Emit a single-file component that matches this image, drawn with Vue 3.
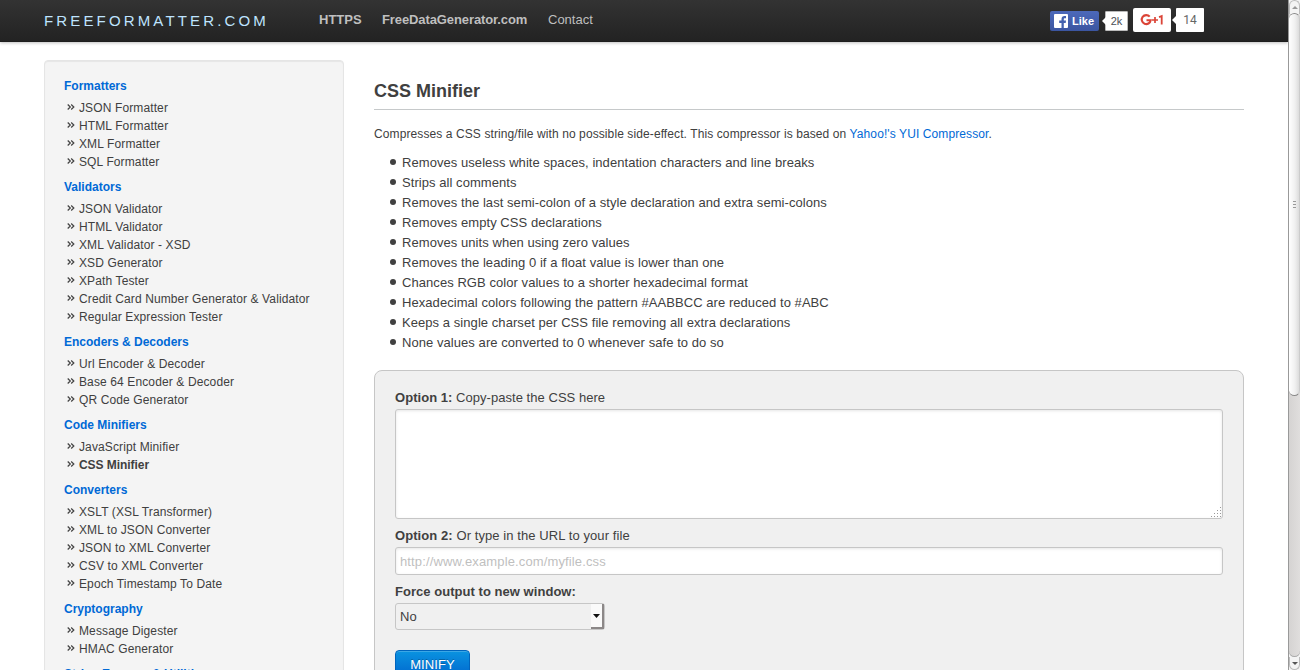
<script setup>
const groups = [
  { title: 'Formatters', items: ['JSON Formatter', 'HTML Formatter', 'XML Formatter', 'SQL Formatter'] },
  { title: 'Validators', items: ['JSON Validator', 'HTML Validator', 'XML Validator - XSD', 'XSD Generator', 'XPath Tester', 'Credit Card Number Generator & Validator', 'Regular Expression Tester'] },
  { title: 'Encoders & Decoders', items: ['Url Encoder & Decoder', 'Base 64 Encoder & Decoder', 'QR Code Generator'] },
  { title: 'Code Minifiers', items: ['JavaScript Minifier', 'CSS Minifier'] },
  { title: 'Converters', items: ['XSLT (XSL Transformer)', 'XML to JSON Converter', 'JSON to XML Converter', 'CSV to XML Converter', 'Epoch Timestamp To Date'] },
  { title: 'Cryptography', items: ['Message Digester', 'HMAC Generator'] },
  { title: 'String Escaper & Utilities', items: [] },
]
const features = [
  'Removes useless white spaces, indentation characters and line breaks',
  'Strips all comments',
  'Removes the last semi-colon of a style declaration and extra semi-colons',
  'Removes empty CSS declarations',
  'Removes units when using zero values',
  'Removes the leading 0 if a float value is lower than one',
  'Chances RGB color values to a shorter hexadecimal format',
  'Hexadecimal colors following the pattern #AABBCC are reduced to #ABC',
  'Keeps a single charset per CSS file removing all extra declarations',
  'None values are converted to 0 whenever safe to do so',
]
</script>

<template>
  <div class="window">
    <div class="page">
      <header class="topbar">
        <a class="brand">FREEFORMATTER.COM</a>
        <nav class="nav">
          <a class="strong https">HTTPS</a>
          <a class="strong fdg">FreeDataGenerator.com</a>
          <a class="contact">Contact</a>
        </nav>
        <div class="social">
          <span class="fb">
            <svg width="14" height="14" viewBox="0 0 14 14"><rect width="14" height="14" rx="1" fill="#fff" /><path d="M7.500 14V9H5.200V6.600h2.300V5.200C7.500 3 8.700 2 10.500 2H12v2.300h-1.200c-.8 0-1 .4-1 1v1.300H12L11.700 9H9.800v5z" fill="#4361ae" /></svg>
            <b>Like</b>
          </span>
          <span class="bubble fbcount">2k</span>
          <span class="gplus">
            <svg width="24" height="14" viewBox="0 0 24 14" fill="none" stroke="#db4437"><path d="M9.700 3.700A4.500 4.500 0 1 0 10.700 7.200H6.500" stroke-width="2.100" /><path d="M12 7h6M15 4v6" stroke-width="1.700" /><path d="M19 4.100l2.700-1V11.500" stroke-width="1.800" /></svg>
          </span>
          <span class="bubble gcount">14</span>
        </div>
      </header>

      <div class="columns">
        <aside class="sidebar">
          <section v-for="g in groups" :key="g.title" class="group">
            <h4>{{ g.title }}</h4>
            <ul>
              <li v-for="i in g.items" :key="i" :class="{ current: i === 'CSS Minifier' }">
                <svg width="8" height="6" viewBox="0 0 8 6" fill="none" stroke="#444" stroke-width="1.250"><path d="M.7.500 3.300 3 .7 5.500M4.200.500 6.800 3 4.200 5.500" /></svg>
                <span>{{ i }}</span>
              </li>
            </ul>
          </section>
        </aside>

        <main class="content">
          <h1><span>CSS Minifier</span></h1>
          <p class="intro">Compresses a CSS string/file with no possible side-effect. This compressor is based on <a>Yahoo!'s YUI Compressor</a>.</p>
          <ul class="features">
            <li v-for="f in features" :key="f"><span>{{ f }}</span></li>
          </ul>
          <form class="panel" @submit.prevent>
            <label><b>Option 1:</b> Copy-paste the CSS here</label>
            <div class="field area">
              <svg width="10" height="10" viewBox="0 0 10 10" fill="#999"><path d="M9 0h1v1H9zM6 3h1v1H6zM9 3h1v1H9zM3 6h1v1H3zM6 6h1v1H6zM9 6h1v1H9zM0 9h1v1H0zM3 9h1v1H3zM6 9h1v1H6zM9 9h1v1H9z" /></svg>
            </div>
            <label class="second"><b>Option 2:</b> Or type in the URL to your file</label>
            <input class="field url" type="text" placeholder="http://www.example.com/myfile.css">
            <label class="third"><b>Force output to new window:</b></label>
            <div class="select"><span>No</span><i><svg width="7" height="4" viewBox="0 0 7 4"><path d="M0 0h7L3.500 4z" fill="#111" /></svg></i></div>
            <button class="go" type="submit">MINIFY</button>
          </form>
        </main>
      </div>
    </div>

    <div class="scrollbar">
      <div class="arrow up"><svg width="6" height="3" viewBox="0 0 6 3"><path d="M0 3h6L3 0z" fill="#999" /></svg></div>
      <div class="track">
        <div class="thumb"><i></i><i></i><i></i></div>
      </div>
      <div class="arrow down"><svg width="6" height="3" viewBox="0 0 6 3"><path d="M0 0h6L3 3z" fill="#555" /></svg></div>
    </div>
  </div>
</template>

<style>
body { margin: 0; overflow: hidden; }
</style>

<style scoped>
.window { display: flex; width: 1300px; height: 670px; overflow: hidden; background: #fff; color: #404040; font-family: "Liberation Sans", Arial, sans-serif; font-size: 13px; }
.page { width: 1288px; height: 670px; overflow: hidden; }
ul { list-style: none; margin: 0; padding: 0; }
.topbar { box-sizing: border-box; display: flex; align-items: flex-start; height: 42px; padding-left: 44px; background: linear-gradient(#333, #222); box-shadow: 0 1px 3px rgba(0,0,0,.25), inset 0 -1px 0 rgba(0,0,0,.1); }
.brand { width: 275px; line-height: 20px; margin-top: 11px; font-size: 15px; letter-spacing: 3.150px; color: #bfe4ff; white-space: nowrap; }
.nav { display: flex; margin-top: 10px; line-height: 20px; color: #bfbfbf; width: 731px; white-space: nowrap; }
.strong { font-weight: bold; }
.https { width: 63px; }
.fdg { width: 166px; letter-spacing: -.1px; }
.social { display: flex; align-items: flex-start; }
.fb { box-sizing: border-box; display: flex; align-items: center; gap: 4px; width: 49px; height: 20px; margin: 11px 6px 0 0; padding-left: 4px; border-radius: 2px; background: linear-gradient(#4c69ba, #3b55a0); color: #fff; font-size: 11px; }
.bubble { position: relative; box-sizing: border-box; background: #fff; text-align: center; color: #4b4f56; border-radius: 1px; }
.bubble::before { content: ""; position: absolute; left: -4px; top: 50%; margin-top: -4px; border: 4px solid transparent; border-left: 0; border-right-color: #fff; }
.fbcount { width: 23px; height: 20px; margin: 11px 5px 0 0; border: 1px solid #bbb; font-size: 11px; line-height: 18px; }
.gplus { box-sizing: border-box; width: 38px; height: 24px; margin: 8px 5px 0 0; padding: 5px 0 0 7px; background: #fff; border-radius: 2px; }
.gcount { width: 28px; height: 24px; margin-top: 8px; font: 12px/25px Roboto, sans-serif; color: #666; }
.gplus svg { display: block; }

.columns { display: flex; align-items: flex-start; padding: 18px 44px 0; }
.sidebar { box-sizing: border-box; flex: none; width: 300px; height: 720px; padding: 16px 19px; border: 1px solid #e5e5e5; border-radius: 4px; background: #f4f4f4; box-shadow: inset 0 1px 1px rgba(0,0,0,.06); font-size: 12px; line-height: 18px; white-space: nowrap; }
.group { margin-bottom: 7px; }
h4 { margin: 0 0 4px; font-size: 12px; line-height: 18px; color: #0069d6; }
.sidebar li { display: flex; align-items: center; height: 18px; gap: 4px; padding-left: 3px; letter-spacing: .12px; }
.sidebar li svg { margin-bottom: 2px; }
.sidebar .current { font-weight: bold; letter-spacing: -.05px; }

.content { width: 870px; margin-left: 30px; }
h1 { box-sizing: border-box; margin: 0; height: 50px; padding-top: 18px; border-bottom: 1px solid #c6c9ca; font-size: 18px; line-height: 26px; }
.intro { margin: 14px 0 8px; font-size: 12px; line-height: 20px; white-space: nowrap; letter-spacing: .1px; }
.intro a { color: #0069d6; }
.features li { display: flex; align-items: center; height: 20px; padding-left: 16px; white-space: nowrap; letter-spacing: .06px; }
.features li::before { content: ""; width: 6px; height: 6px; margin-right: 6px; border-radius: 50%; background: #404040; }
.panel { box-sizing: border-box; height: 340px; margin-top: 18px; padding: 17px 20px; border: 1px solid #c6c6c6; border-radius: 8px; background: #f0f0f0; }
.panel label { display: block; height: 21px; line-height: 20px; letter-spacing: .04px; }
.panel .second { margin-top: 7px; letter-spacing: .08px; }
.panel .third { margin-top: 7px; }
.field { box-sizing: border-box; display: block; width: 828px; border: 1px solid #c6c6c6; border-radius: 3px; background: #fff; box-shadow: inset 0 1px 3px rgba(0,0,0,.1); }
.area { height: 110px; position: relative; }
.area svg { position: absolute; right: 1px; bottom: 1px; }
.url { height: 28px; padding: 0 4px; font: 13px "Liberation Sans", Arial, sans-serif; letter-spacing: .13px; }
.url::placeholder { color: #bfbfbf; opacity: 1; }
.select { box-sizing: border-box; display: flex; justify-content: space-between; width: 210px; height: 27px; padding-left: 4px; border: 1px solid #c6c6c6; border-radius: 3px; line-height: 26px; }
.select i { box-sizing: border-box; display: flex; align-items: center; justify-content: center; width: 13px; background: #fafafa; border-right: 2px solid #8c8888; border-bottom: 2px solid #8c8888; }
.go { box-sizing: border-box; display: block; width: 75px; height: 30px; margin-top: 20px; padding: 0; border: 1px solid #0064bd; border-radius: 4px; background: linear-gradient(#0a93e0, #0064cd); box-shadow: inset 0 1px 0 rgba(255,255,255,.2); color: #fff; font: 13px/28px "Liberation Sans", Arial, sans-serif; letter-spacing: .1px; text-shadow: 0 -1px 0 rgba(0,0,0,.25); }

.scrollbar { box-sizing: border-box; display: flex; flex-direction: column; width: 12px; height: 670px; border-left: 1px solid #999; background: #f4f4f4; }
.arrow { box-sizing: border-box; flex: none; display: flex; align-items: center; justify-content: center; border: 1px solid #bbb; background: #f4f4f4; }
.up { height: 14px; border-radius: 6px 6px 0 0; border-bottom: 0; }
.down { height: 13px; border-radius: 0 0 6px 6px; border-top: 0; }
.track { flex: 1; background: linear-gradient(90deg, #d5d3d2, #e0dedd); border-radius: 0 0 6px 6px; box-shadow: inset 0 -1px 0 #aaa; }
.thumb { box-sizing: border-box; display: flex; flex-direction: column; align-items: center; justify-content: center; gap: 2px; height: 383px; margin-top: -1px; border: 1px solid #888; border-left: 0; border-right-color: #ccc; border-radius: 6px; background: linear-gradient(90deg, #fff, #f0f0f0 60%, #dcdcdc); }
.thumb i { width: 3px; height: 1px; background: #999; }
</style>
